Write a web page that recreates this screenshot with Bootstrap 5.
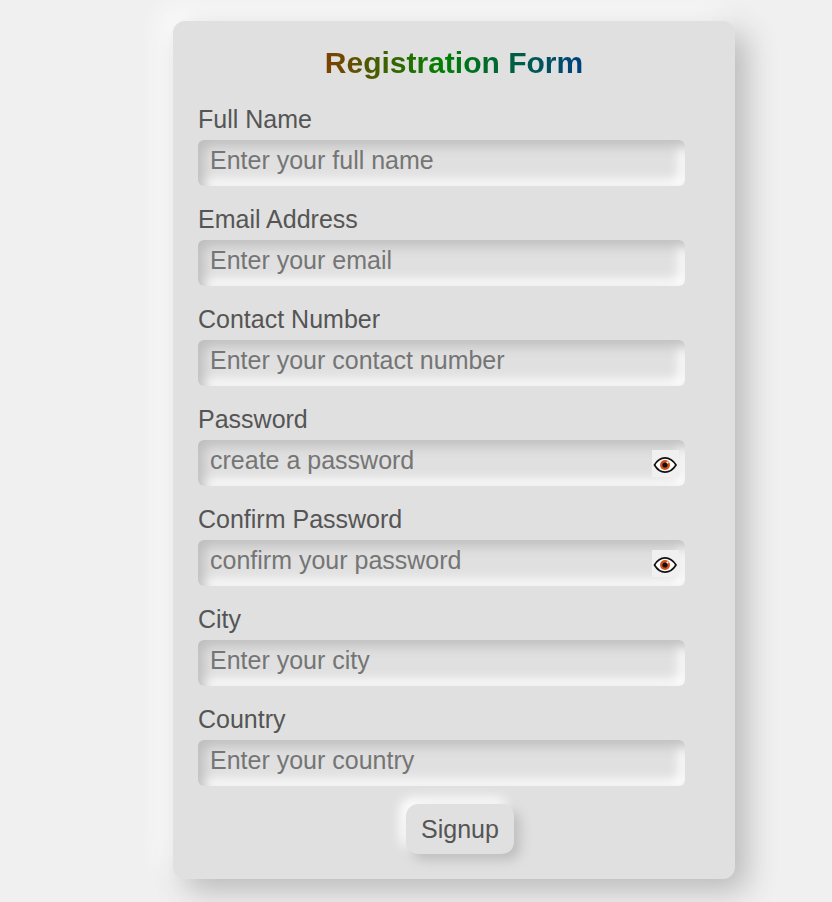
<!DOCTYPE html>
<html lang="en">
<head>
<meta charset="utf-8">
<meta name="viewport" content="width=device-width, initial-scale=1">
<title>Registration Form</title>
<link href="https://cdn.jsdelivr.net/npm/bootstrap@5.3.0/dist/css/bootstrap.min.css" rel="stylesheet">
<style>
body { background: #f0f0f0; color: #555; font-family: "Liberation Sans", Arial, sans-serif; font-size: 25px; line-height: 30px; }
.page { padding: 21px 0 23px 76px; }
.signup-form { width: 100%; max-width: 562px; padding: 25px; border-radius: 12px; background: #e0e0e0; box-shadow: 12px 12px 30px #bababa, -12px -12px 25px #fcfcfc; }
.title { font-size: 30px; line-height: 34px; margin-bottom: 24px; }
.title span { background: linear-gradient(90deg, #804000, #008000 45%, #004080); -webkit-background-clip: text; background-clip: text; color: transparent; }
.field { margin: 0 25px 18px 0; }
.field label { margin-bottom: 6px; }
.field .form-control { height: 46px; padding: 5px 12px 11px; border: 0; border-radius: 6px; background: #e0e0e0; color: #555; font-size: 25px; line-height: 30px; box-shadow: inset 6px 6px 12px #bebebe, inset -6px -6px 12px #fff; }
.field .form-control::placeholder { color: #757575; }
.eye { top: 10px; right: 6px; width: 27px; height: 27px; background: #f0f0f0; }
.eye svg { display: block; }
.signup { height: 50px; margin-left: 12px; padding: 0 15px; border: 0; border-radius: 12px; background: #e0e0e0; color: #555; box-shadow: 6px 6px 12px #bebebe, -6px -6px 12px #fff; }
</style>
</head>
<body>
<main class="page d-flex justify-content-center">
<form class="signup-form">
  <h1 class="title fw-bold text-center"><span>Registration Form</span></h1>
  <div class="field"><label class="d-block" for="name">Full Name</label><input class="form-control" id="name" type="text" placeholder="Enter your full name"></div>
  <div class="field"><label class="d-block" for="email">Email Address</label><input class="form-control" id="email" type="email" placeholder="Enter your email"></div>
  <div class="field"><label class="d-block" for="contact">Contact Number</label><input class="form-control" id="contact" type="tel" placeholder="Enter your contact number"></div>
  <div class="field"><label class="d-block" for="password">Password</label>
    <div class="position-relative"><input class="form-control" id="password" type="password" placeholder="create a password">
      <button class="eye position-absolute border-0 p-0" type="button" aria-label="Show password"><svg width="27" height="27" viewBox="0 0 27 27" aria-hidden="true"><path d="M2.5 15C8 5.500 18 5.500 24 15C18 24.500 8 24.500 2.500 15Z" fill="#fff" stroke="#111" stroke-width="1.700"/><circle cx="13" cy="15" r="5" fill="#d4511b"/><circle cx="13" cy="15" r="2.600" fill="#111"/><circle cx="15.500" cy="12.500" r="1" fill="#fff"/></svg></button></div></div>
  <div class="field"><label class="d-block" for="confirm">Confirm Password</label>
    <div class="position-relative"><input class="form-control" id="confirm" type="password" placeholder="confirm your password">
      <button class="eye position-absolute border-0 p-0" type="button" aria-label="Show confirmed password"><svg width="27" height="27" viewBox="0 0 27 27" aria-hidden="true"><path d="M2.5 15C8 5.500 18 5.500 24 15C18 24.500 8 24.500 2.500 15Z" fill="#fff" stroke="#111" stroke-width="1.700"/><circle cx="13" cy="15" r="5" fill="#d4511b"/><circle cx="13" cy="15" r="2.600" fill="#111"/><circle cx="15.500" cy="12.500" r="1" fill="#fff"/></svg></button></div></div>
  <div class="field"><label class="d-block" for="city">City</label><input class="form-control" id="city" type="text" placeholder="Enter your city"></div>
  <div class="field"><label class="d-block" for="country">Country</label><input class="form-control" id="country" type="text" placeholder="Enter your country"></div>
  <div class="d-flex justify-content-center"><button class="signup" type="submit">Signup</button></div>
</form>
</main>
<script src="https://cdn.jsdelivr.net/npm/bootstrap@5.3.0/dist/js/bootstrap.bundle.min.js"></script>
</body>
</html>
